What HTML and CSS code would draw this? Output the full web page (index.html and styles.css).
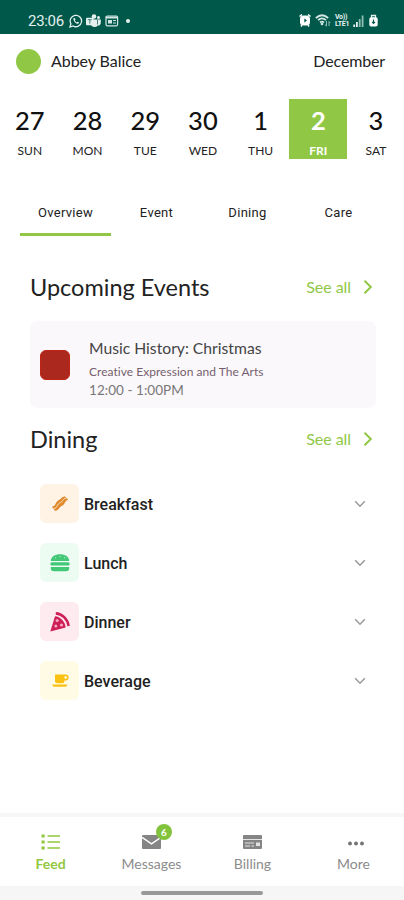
FILE: index.html
```html
<!DOCTYPE html>
<html lang="en">
<head>
    <meta charset="UTF-8">
    <meta name="viewport" content="width=device-width, initial-scale=1.0">
    <title>Feed</title>
    <link rel="stylesheet" href="styles.css">
</head>
<body>
    <div class="status-bar">
        <span class="clock">23:06</span>
        <svg class="whatsapp" width="14" height="14" viewBox="0 0 14 14">
            <path d="M1 13l.9-3.2A5.7 5.7 0 1 1 4.1 12z" fill="none" stroke="#e4f1ee" stroke-width="1.3"/>
            <path d="M4.8 4c-1.200 1 .8 5.200 3.600 5.800 1 .2 1.800-.6 1.700-1.200L8.500 7.700l-.8.7C6.900 8 6.200 7.300 5.900 6.500l.6-.7L5.800 4z" fill="#e4f1ee"/>
        </svg>
        <svg class="teams" width="15" height="14" viewBox="0 0 15 14">
            <circle cx="8" cy="2.500" r="2.300" fill="#e4f1ee"/>
            <circle cx="12.500" cy="3.500" r="1.500" fill="#e4f1ee"/>
            <path d="M5 5.500h9.800V9a2.500 2.500 0 0 1-3 2.400A4 4 0 0 1 5 11z" fill="#e4f1ee"/>
            <rect x="0" y="3.800" width="7.600" height="7.400" rx="1" fill="#e4f1ee"/>
            <path d="M1.800 5.700h4M3.800 5.700v4M11.500 6v4.500" stroke="#00584a" stroke-width=".7"/>
        </svg>
        <svg class="news" width="14" height="12" viewBox="0 0 14 12">
            <rect x="1" y="1" width="11.600" height="9.800" rx="1.200" fill="none" stroke="#d3e7e2" stroke-width="1.200"/>
            <path d="M1 2.500h11.500" stroke="#d3e7e2" stroke-width="2"/>
            <rect x="3" y="5" width="4" height="3.500" fill="#d3e7e2"/>
            <path d="M8 5.500h3M8 8h3" stroke="#d3e7e2"/>
        </svg>
        <span class="dot"></span>
        <div class="status-right">
            <svg width="12" height="13" viewBox="0 0 12 13">
                <path d="M.5 2.500L3 .5M11.500 2.500L9 .5M2 12.500l1-1.500M10 12.500L9 11" stroke="#fff" stroke-width="1.500"/>
                <rect x="1" y="1.500" width="10" height="10" rx="3.500" fill="#fff"/>
                <path d="M5.300 4.500L8 6.500 5.300 8.500z" fill="#00584a"/>
            </svg>
            <svg width="16" height="13" viewBox="0 0 16 13">
                <path d="M.8 4Q7 -1.500 13.200 4M3 6.200q4-3.500 8 0M5 8.500q2-1.800 4 0" fill="none" stroke="#d3e7e2" stroke-width="1.700"/>
                <circle cx="7" cy="10" r="1.300" fill="#d3e7e2"/>
                <path d="M11.500 7v5M9.900 10.500l1.600 1.600M14 12V7.500M14 7.500l1.300 1.500" stroke="#8fbdb3" fill="none"/>
            </svg>
            <span class="volte"><b>Vo))</b><b>LTE1</b></span>
            <svg width="11" height="12" viewBox="0 0 11 12">
                <path d="M1.200 12V9.500M3.900 12V7" stroke="#e4f1ee" stroke-width="1.800"/>
                <path d="M6.700 12V4M9.600 12V.5" stroke="#8fbdb3" stroke-width="1.800"/>
            </svg>
            <svg class="lock" width="9" height="13" viewBox="0 0 9 13">
                <path d="M2.500 4V1.500h4V4" fill="none" stroke="#e4f1ee" stroke-width="1.300"/>
                <rect x=".3" y="3.300" width="8.400" height="9.200" rx="1.800" fill="#fff"/>
                <path d="M4.500 5.500v3.800M3 7.800l1.500 1.700L6 7.800" fill="none" stroke="#00584a" stroke-width="1.100"/>
            </svg>
        </div>
    </div>

    <header class="profile">
        <span class="avatar"></span>
        <span class="name">Abbey Balice</span>
        <span class="month">December</span>
    </header>

    <div class="week">
        <div class="day"><strong>27</strong><span>SUN</span></div>
        <div class="day"><strong>28</strong><span>MON</span></div>
        <div class="day"><strong>29</strong><span>TUE</span></div>
        <div class="day"><strong>30</strong><span>WED</span></div>
        <div class="day"><strong>1</strong><span>THU</span></div>
        <div class="day selected"><strong>2</strong><span>FRI</span></div>
        <div class="day"><strong>3</strong><span>SAT</span></div>
    </div>

    <nav class="tabs">
        <a class="active">Overview</a>
        <a>Event</a>
        <a>Dining</a>
        <a>Care</a>
    </nav>

    <main>
        <div class="section-head">
            <h2>Upcoming Events</h2>
            <a class="see-all">See all
                <svg width="10" height="16" viewBox="0 0 10 16"><path d="M1.500 1.800L7.800 8l-6.300 6.200"/></svg>
            </a>
        </div>
        <div class="event-card">
            <span class="event-color"></span>
            <div class="event-info">
                <h3>Music History: Christmas</h3>
                <p class="category">Creative Expression and The Arts</p>
                <p class="time">12:00 - 1:00PM</p>
            </div>
        </div>

        <div class="section-head">
            <h2>Dining</h2>
            <a class="see-all">See all
                <svg width="10" height="16" viewBox="0 0 10 16"><path d="M1.500 1.800L7.800 8l-6.300 6.200"/></svg>
            </a>
        </div>
        <div class="meals">
            <div class="meal">
                <span class="meal-icon breakfast">
                    <svg width="20" height="20" viewBox="0 0 20 20">
                        <path d="M1.800 12.600C5 12.600 5 10.500 6.200 8.500 7.500 6.300 9.500 6.500 11 4.600 12.300 3 13.500 2.300 15 2.600L18.300 5.800C15.500 6.300 15.300 8.500 14 10.300 12.600 12.200 10.700 12 9.300 14 8 15.900 6.800 16.800 5 16.800z" fill="#e08a2e"/>
                        <path d="M3.600 14.600C7.200 14.300 6.600 11.700 8.400 10 10 8.500 11.500 8.500 12.600 6.600 13.500 5 14.500 4.300 16.400 4.200" fill="none" stroke="#fde6c8" stroke-width="1"/>
                    </svg>
                </span>
                <span class="meal-name">Breakfast</span>
                <svg class="chevron" width="12" height="8" viewBox="0 0 12 8"><path d="M1.200 1.300L6 6.200l4.800-4.900"/></svg>
            </div>
            <div class="meal">
                <span class="meal-icon lunch">
                    <svg width="20" height="20" viewBox="0 0 20 20" fill="#43c878">
                        <path d="M.8 8C.8 3.800 5 1.200 10 1.200S19.200 3.800 19.200 8z"/>
                        <rect x=".3" y="9.300" width="19.400" height="3.200" rx="1.600"/>
                        <path d="M.8 14h18.400v1.500a3 3 0 0 1-3 2.800H3.800a3 3 0 0 1-3-2.800z"/>
                        <path d="M5 4.800h1.200M9.500 3.500h1.200M14 4.800h1.200" stroke="#b1ebc8"/>
                    </svg>
                </span>
                <span class="meal-name">Lunch</span>
                <svg class="chevron" width="12" height="8" viewBox="0 0 12 8"><path d="M1.200 1.300L6 6.200l4.800-4.900"/></svg>
            </div>
            <div class="meal">
                <span class="meal-icon dinner">
                    <svg width="20" height="20" viewBox="0 0 20 20">
                        <path d="M5.800 1.400C12 1.700 17.600 7 18.600 14" fill="none" stroke="#ce1f59" stroke-width="2.600"/>
                        <path d="M5 4.200C10.500 4.500 15 9.500 15.700 15.500L.3 19.500z" fill="#ce1f59"/>
                        <g fill="#f3a9c0">
                            <circle cx="7.200" cy="8.500" r="1.600"/>
                            <circle cx="11.500" cy="13" r="1.600"/>
                            <circle cx="5.800" cy="14" r="1.500"/>
                        </g>
                    </svg>
                </span>
                <span class="meal-name">Dinner</span>
                <svg class="chevron" width="12" height="8" viewBox="0 0 12 8"><path d="M1.200 1.300L6 6.200l4.800-4.900"/></svg>
            </div>
            <div class="meal">
                <span class="meal-icon beverage">
                    <svg width="18" height="16" viewBox="0 0 18 16">
                        <path d="M4 1.500h9.500V8a2.300 2.300 0 0 1-2.300 2.300H6.300A2.300 2.300 0 0 1 4 8z" fill="#fbc112"/>
                        <path d="M12.500 2.400h2.400c1.700 0 1.900.8 1.900 2s-.6 2.200-2 2.200h-2.300" fill="none" stroke="#fbc112" stroke-width="1.600"/>
                        <path d="M1 11.600h15.500q-.8 2.200-2.500 2.200H3.500Q1.800 13.800 1 11.600z" fill="#fbc112"/>
                    </svg>
                </span>
                <span class="meal-name">Beverage</span>
                <svg class="chevron" width="12" height="8" viewBox="0 0 12 8"><path d="M1.200 1.300L6 6.200l4.800-4.900"/></svg>
            </div>
        </div>
    </main>

    <footer class="bottom-nav">
        <a class="nav-item active">
            <span class="nav-icon">
                <svg width="20" height="16" viewBox="0 0 20 16">
                    <path d="M.5 2h3.200M.5 8h3.200M.5 14h3.200" stroke="#92c83e" stroke-width="3.200"/>
                    <path d="M6.500 2h12.500M6.500 8h12.500M6.500 14h12.500" stroke="#92c83e" stroke-width="1.700"/>
                </svg>
            </span>
            Feed
        </a>
        <a class="nav-item">
            <span class="nav-icon">
                <svg width="19" height="14" viewBox="0 0 19 14">
                    <rect width="19" height="14" rx="1" fill="#858585"/>
                    <path d="M0 2.300l9.500 6.500L19 2.300" fill="none" stroke="#fff" stroke-width="1.500"/>
                </svg>
                <span class="badge">6</span>
            </span>
            Messages
        </a>
        <a class="nav-item">
            <span class="nav-icon">
                <svg width="19" height="14" viewBox="0 0 19 14">
                    <rect width="19" height="14" rx="1" fill="#858585"/>
                    <path d="M0 4.500h19M2 8h9M2 11h5M8.500 11H11" stroke="#e4e4e4" stroke-width="1.100"/>
                    <rect x="13" y="7.500" width="4" height="3.500" fill="#e4e4e4"/>
                </svg>
            </span>
            Billing
        </a>
        <a class="nav-item more">
            <span class="nav-icon">
                <svg width="18" height="5" viewBox="0 0 18 5" fill="#777">
                    <circle cx="3" cy="2.500" r="2"/>
                    <circle cx="9" cy="2.500" r="2"/>
                    <circle cx="15" cy="2.500" r="2"/>
                </svg>
            </span>
            More
        </a>
    </footer>
    <div class="gesture-bar"><span></span></div>
</body>
</html>
```
FILE: styles.css
```css
* {
    margin: 0;
    padding: 0;
    box-sizing: border-box;
}

body {
    width: 404px;
    height: 900px;
    display: flex;
    flex-direction: column;
    background-color: #fff;
    color: #222;
    font-family: Lato, sans-serif;
    overflow: hidden;
}

svg {
    display: block;
    flex-shrink: 0;
}

/* Status bar */
.status-bar {
    height: 34px;
    padding: 7px 26px 0 28px;
    display: flex;
    align-items: center;
    background-color: #00584a;
    color: #e4f1ee;
}

.clock {
    width: 41px;
    font-family: Roboto, sans-serif;
    font-size: 15px;
    letter-spacing: -0.3px;
}

.teams {
    margin-left: 3px;
}

.news {
    margin-left: 4px;
}

.dot {
    width: 4px;
    height: 4px;
    margin-left: 7px;
    border-radius: 50%;
    background-color: #e4f1ee;
}

.status-right {
    display: flex;
    align-items: center;
    gap: 4px;
    margin-left: auto;
}

.volte {
    width: 14px;
    display: flex;
    flex-direction: column;
    font-family: Roboto, sans-serif;
    font-size: 7px;
    line-height: 6.5px;
    letter-spacing: -0.3px;
}

.lock {
    margin-left: 1px;
}

/* Profile */
.profile {
    height: 65px;
    padding: 0 19px 11px 16px;
    display: flex;
    align-items: center;
    font-size: 16px;
}

.avatar {
    width: 25px;
    height: 25px;
    margin-right: 10px;
    border-radius: 50%;
    background-color: #90c846;
}

.name {
    letter-spacing: -0.05px;
    padding-bottom: 2px;
}

.month {
    margin-left: auto;
    letter-spacing: -0.15px;
    padding-bottom: 2px;
}

/* Week */
.week {
    display: grid;
    grid-template-columns: repeat(7, 57.700px);
    padding-left: 1px;
    height: 60px;
}

.day {
    display: flex;
    flex-direction: column;
    align-items: center;
    padding-top: 5px;
    font-size: 12px;
    line-height: 15px;
}

.day strong {
    font-size: 25.500px;
    font-weight: 500;
    line-height: 32px;
    margin-bottom: 7px;
    color: #111;
}

.day.selected {
    background-color: #90c846;
    color: #fff;
    font-weight: 700;
}

.day.selected strong {
    color: #fff;
    font-weight: 700;
}

/* Tabs */
.tabs {
    display: grid;
    grid-template-columns: repeat(4, 91px);
    margin: 33px 0 0 20px;
}

.tabs a {
    height: 44px;
    text-align: center;
    font-family: Roboto, sans-serif;
    font-size: 13px;
    line-height: 42px;
    letter-spacing: 0.3px;
    border-bottom: 3px solid transparent;
}

.tabs .active {
    border-bottom-color: #90c846;
}

main {
    flex: 1;
    padding: 35px 28px 0 30px;
}

.section-head {
    display: flex;
    align-items: center;
    justify-content: space-between;
    height: 32px;
    margin-bottom: 18px;
}

h2 {
    font-size: 23.500px;
    font-weight: 400;
}

.see-all {
    display: flex;
    align-items: center;
    gap: 12px;
    color: #90c846;
    font-size: 16px;
    letter-spacing: -0.05px;
    padding: 0 3px 1px 0;
}

.see-all svg path {
    fill: none;
    stroke: #90c846;
    stroke-width: 2;
}

.event-card {
    display: flex;
    align-items: center;
    height: 87px;
    margin-bottom: 15px;
    padding-left: 10px;
    border-radius: 7px;
    background-color: #fbf8fc;
}

.event-color {
    width: 30px;
    height: 30px;
    margin-right: 19px;
    border-radius: 6px;
    border: 1px solid #c02316;
    background-color: #aa281d;
}

.event-info {
    padding-top: 5px;
}

.event-info h3 {
    font-size: 15.700px;
    font-weight: 400;
    line-height: 24px;
    color: #444;
}

.event-info .category {
    font-size: 12px;
    line-height: 23px;
    letter-spacing: 0.03px;
    color: #755f6d;
}

.event-info .time {
    font-size: 13.500px;
    line-height: 15px;
    letter-spacing: 0.05px;
    color: #777;
}

/* Dining list */
.meals {
    padding: 11px 10px 0;
    display: flex;
    flex-direction: column;
    gap: 20px;
}

.meal {
    display: flex;
    align-items: center;
    height: 39px;
}

.meal-icon {
    width: 39px;
    height: 39px;
    display: flex;
    align-items: center;
    justify-content: center;
    margin-right: 5px;
    border-radius: 6px;
}

.breakfast {
    background-color: #fff3e5;
}

.lunch {
    background-color: #edfcf3;
}

.dinner {
    background-color: #fdebf0;
}

.beverage {
    background-color: #fffbe5;
}

.meal-name {
    font-family: Roboto, sans-serif;
    font-size: 16px;
    font-weight: 500;
    line-height: 20px;
    padding-top: 2px;
}

.chevron {
    margin-left: auto;
}

.chevron path {
    fill: none;
    stroke: #999;
    stroke-width: 1.500;
}

/* Bottom navigation */
.bottom-nav {
    display: grid;
    grid-template-columns: repeat(4, 101px);
    height: 73px;
    border-top: 4px solid #f7f7f7;
}

.nav-item {
    display: flex;
    flex-direction: column;
    align-items: center;
    padding-top: 14px;
    font-size: 14px;
    line-height: 22px;
    color: #8c8c8c;
}

.nav-item.active {
    color: #92c83e;
    font-weight: 700;
}

.nav-icon {
    position: relative;
    display: flex;
    align-items: center;
    height: 22px;
}

.more .nav-icon {
    padding-top: 3px;
    padding-left: 4px;
}

.badge {
    position: absolute;
    top: -7px;
    left: 14px;
    width: 16px;
    height: 16px;
    border-radius: 50%;
    background-color: #83c33b;
    color: #fff;
    font-size: 10px;
    font-weight: 700;
    line-height: 16px;
    text-align: center;
}

.gesture-bar {
    display: flex;
    justify-content: center;
    height: 14px;
    padding-top: 5px;
    background-color: #f6f6f6;
}

.gesture-bar span {
    width: 122px;
    height: 4px;
    border-radius: 2px;
    background-color: #999;
}
```
